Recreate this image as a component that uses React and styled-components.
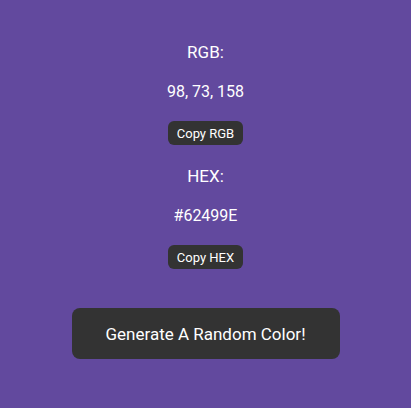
import React from "react";
import styled, { createGlobalStyle } from "styled-components";

const Global = createGlobalStyle`
  html, body { margin: 0; padding: 0; background: #62499e; }
  body { font-family: Roboto, "Noto Sans", sans-serif; color: #ffffff; }
`;

const Page = styled.main`
  min-height: 408px;
  display: flex;
  flex-direction: column;
  align-items: center;
  padding-top: 42px;
  box-sizing: border-box;
`;

const Section = styled.section`
  display: flex;
  flex-direction: column;
  align-items: center;
  margin-bottom: ${(p) => p.$after}px;
`;

const Label = styled.div`
  font-size: 17px;
  line-height: 20px;
  height: 20px;
  margin-bottom: 20px;
`;

const Value = styled.div`
  font-size: 16px;
  line-height: 20px;
  height: 20px;
  margin-bottom: 19px;
`;

const SmallButton = styled.button`
  font-family: inherit;
  font-size: 13px;
  color: #ffffff;
  background: #333333;
  border: none;
  border-radius: 6px;
  height: 24px;
  padding: 0 9px;
  cursor: pointer;
`;

const BigButton = styled.button`
  font-family: inherit;
  font-size: 17px;
  color: #ffffff;
  background: #333333;
  border: none;
  border-radius: 8px;
  width: 268px;
  height: 51px;
  cursor: pointer;
`;

export default function App() {
  return (
    <>
      <Global />
      <Page>
        <Section $after={21}>
          <Label>RGB:</Label>
          <Value>98, 73, 158</Value>
          <SmallButton>Copy RGB</SmallButton>
        </Section>
        <Section $after={39}>
          <Label>HEX:</Label>
          <Value>#62499E</Value>
          <SmallButton>Copy HEX</SmallButton>
        </Section>
        <BigButton>Generate A Random Color!</BigButton>
      </Page>
    </>
  );
}
